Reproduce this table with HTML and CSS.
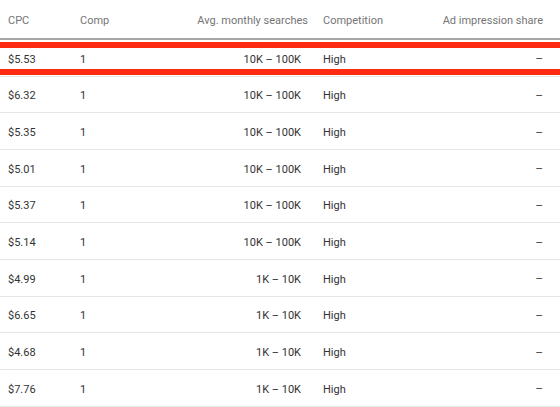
FILE: index.html
```html
<!DOCTYPE html>
<html>
<head>
<meta charset="utf-8">
<link rel="stylesheet" href="styles.css">
</head>
<body>
<div class="table">
  <div class="row head">
    <div class="c1">CPC</div>
    <div class="c2">Comp</div>
    <div class="c3">Avg. monthly searches</div>
    <div class="c4">Competition</div>
    <div class="c5">Ad impression share</div>
  </div>
  <div class="row"><div class="c1">$5.53</div><div class="c2">1</div><div class="c3">10K – 100K</div><div class="c4">High</div><div class="c5 dash">–</div></div>
  <div class="row"><div class="c1">$6.32</div><div class="c2">1</div><div class="c3">10K – 100K</div><div class="c4">High</div><div class="c5 dash">–</div></div>
  <div class="row"><div class="c1">$5.35</div><div class="c2">1</div><div class="c3">10K – 100K</div><div class="c4">High</div><div class="c5 dash">–</div></div>
  <div class="row"><div class="c1">$5.01</div><div class="c2">1</div><div class="c3">10K – 100K</div><div class="c4">High</div><div class="c5 dash">–</div></div>
  <div class="row"><div class="c1">$5.37</div><div class="c2">1</div><div class="c3">10K – 100K</div><div class="c4">High</div><div class="c5 dash">–</div></div>
  <div class="row"><div class="c1">$5.14</div><div class="c2">1</div><div class="c3">10K – 100K</div><div class="c4">High</div><div class="c5 dash">–</div></div>
  <div class="row"><div class="c1">$4.99</div><div class="c2">1</div><div class="c3">1K – 10K</div><div class="c4">High</div><div class="c5 dash">–</div></div>
  <div class="row"><div class="c1">$6.65</div><div class="c2">1</div><div class="c3">1K – 10K</div><div class="c4">High</div><div class="c5 dash">–</div></div>
  <div class="row"><div class="c1">$4.68</div><div class="c2">1</div><div class="c3">1K – 10K</div><div class="c4">High</div><div class="c5 dash">–</div></div>
  <div class="row"><div class="c1">$7.76</div><div class="c2">1</div><div class="c3">1K – 10K</div><div class="c4">High</div><div class="c5 dash">–</div></div>
  <div class="highlight"></div>
</div>
</body>
</html>
```
FILE: styles.css
```css
html, body {
  margin: 0;
  padding: 0;
  background: #ffffff;
}
body {
  width: 560px;
  height: 407px;
  overflow: hidden;
  font-family: Roboto, "Liberation Sans", sans-serif;
  font-size: 11px;
  color: #333333;
}
.table {
  position: relative;
}
.row {
  display: grid;
  grid-template-columns: 80px 100px 128px 112px 123px;
  padding-right: 17px;
  padding-top: 3px;
  height: 36.67px;
  align-items: center;
  box-sizing: border-box;
  border-bottom: 1px solid #e6e6e6;
}
.row.head {
  height: 40px;
  padding-top: 3px;
  color: #757575;
  border-bottom: 2px solid #a6a6a6;
}
.c1 { padding-left: 8px; }
.c3 { text-align: right; padding-right: 7px; }
.head .c3 { padding-right: 0; }
.c4 { padding-left: 15px; }
.c5 { text-align: right; }
.dash { font-size: 12px; color: #555555; }
.highlight {
  position: absolute;
  left: -10px;
  right: -10px;
  top: 42px;
  height: 33px;
  border: 6px solid #ff2a12;
  border-left: none;
  border-right: none;
  box-sizing: border-box;
}
```
